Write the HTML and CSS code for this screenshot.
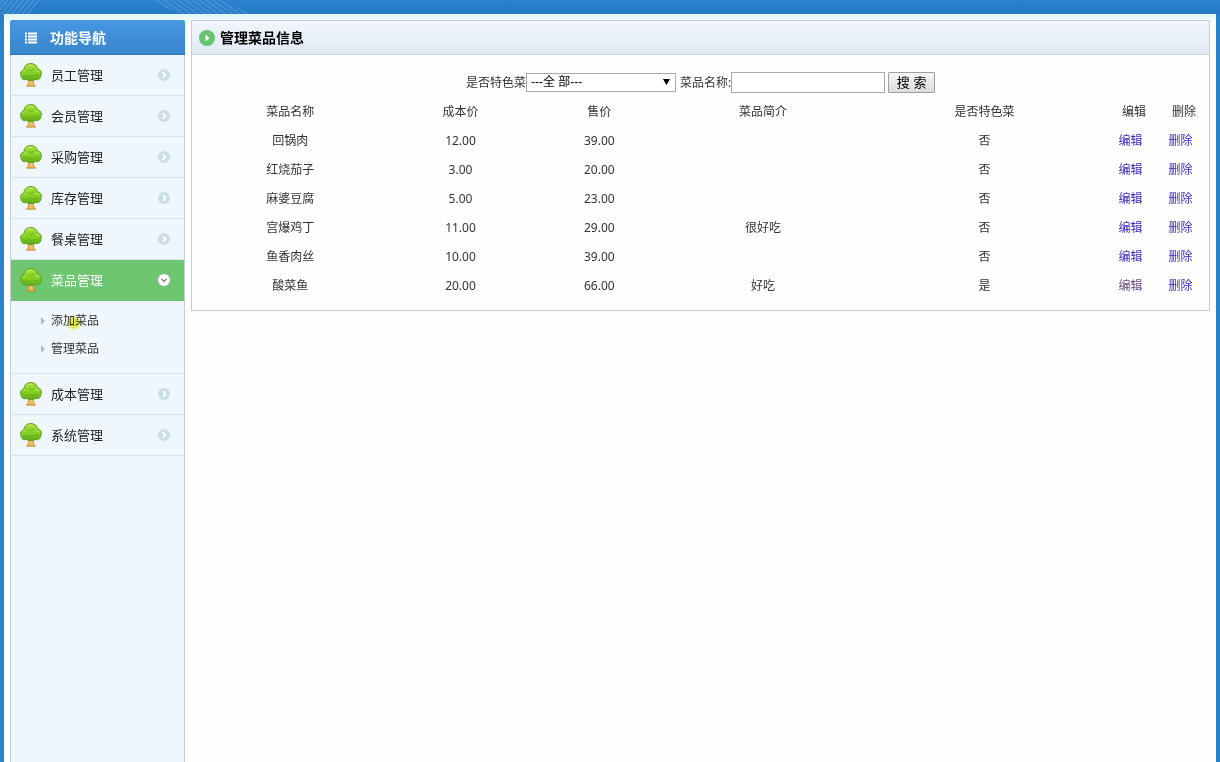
FILE: index.html
```html
<!DOCTYPE html>
<html lang="zh-CN">
<head>
<meta charset="utf-8">
<title>管理菜品信息</title>
<link rel="stylesheet" href="styles.css">
</head>
<body>
<svg class="defs" aria-hidden="true">
  <defs>
    <linearGradient id="leafFill" x1="0" y1="0" x2="0" y2="1"><stop offset="0" stop-color="#a9e03c"/><stop offset="0.6" stop-color="#84cd22"/><stop offset="1" stop-color="#5dab18"/></linearGradient>
    <pattern id="hatch" width="5" height="4" patternUnits="userSpaceOnUse" patternTransform="rotate(35)"><path d="M0 2h5" stroke="#5a9fdc" stroke-width="1"/></pattern>
    <pattern id="hatchLeft" width="5" height="4" patternUnits="userSpaceOnUse" patternTransform="rotate(-50)"><path d="M0 2h5" stroke="#5a9fdc" stroke-width="1"/></pattern>
  </defs>
  <symbol id="tree" viewBox="0 0 24 26">
    <path d="M9.500 16h5l.2 6 2 2.200H7.300l2-2.200z" fill="#e9b04a" stroke="#b9832c" stroke-width=".7"/>
    <path d="M11 18v5M13 18v5" stroke="#f8d583" stroke-width=".8"/>
    <path d="M7.500 17.500C4.500 18.500 1.800 16.500 2 13.700.6 11.200 2.200 8.300 5 8 4.800 4 8.300 1.400 12 1.500c3.600 0 6.200 2.200 6.400 5.300 3.200.4 4.900 3.600 3.500 6.500.3 3-2.500 5-5.600 4.200-2.500 1.400-6.500 1.400-8.800 0z" fill="url(#leafFill)" stroke="#549b18" stroke-width=".9"/>
    <path d="M4 13c1.500 2 4 2 5.500 0 1.500 2.300 5 2.300 6.500 0 1.300 1 3 .9 4-.5M10 7.500c1.500 1.500 4 1.200 5-.8" fill="none" stroke="#5fa81c" stroke-width=".8"/>
    <path d="M8 4.800c1.400-1.700 3.700-2.100 5.600-1.400M4.300 10c.4-.7.900-1.100 1.700-1.200M16.500 8.700c1.400-.4 2.700.2 3.300 1.500" fill="none" stroke="#cdf27a" stroke-width=".9"/>
  </symbol>
  <symbol id="right" viewBox="0 0 12 12"><circle cx="6" cy="6" r="6" fill="#ccdee5"/><path d="M4.700 3.200 7.600 6 4.700 8.800" fill="none" stroke="#fff" stroke-width="1.800"/></symbol>
  <symbol id="down" viewBox="0 0 12 12"><circle cx="6" cy="6" r="6" fill="#fff"/><path d="M3.300 4.800 6 7.500 8.700 4.800" fill="none" stroke="#7b8d80" stroke-width="1.400"/></symbol>
</svg>

<header class="topbar">
  <svg class="topbar-lines" width="260" height="14" aria-hidden="true">
    <path d="M0 0h40L30 14H0z" fill="url(#hatchLeft)"/>
    <path d="M150 0h75l24 14h-70z" fill="url(#hatch)"/>
  </svg>
</header>

<div class="frame">
  <nav class="sidebar">
    <h2 class="sidebar-title">
      <svg class="list-icon" viewBox="0 0 12 12" aria-hidden="true"><path d="M0 1.500h2M0 4.500h2M0 7.500h2M0 10.500h2M3 1.500h9M3 4.500h9M3 7.500h9M3 10.500h9" stroke="#fff" stroke-width="2"/></svg>
      功能导航
    </h2>
    <ul class="menu">
      <li><a class="menu-item" href="#"><svg class="tree"><use href="#tree"/></svg><span>员工管理</span><svg class="chevron"><use href="#right"/></svg></a></li>
      <li><a class="menu-item" href="#"><svg class="tree"><use href="#tree"/></svg><span>会员管理</span><svg class="chevron"><use href="#right"/></svg></a></li>
      <li><a class="menu-item" href="#"><svg class="tree"><use href="#tree"/></svg><span>采购管理</span><svg class="chevron"><use href="#right"/></svg></a></li>
      <li><a class="menu-item" href="#"><svg class="tree"><use href="#tree"/></svg><span>库存管理</span><svg class="chevron"><use href="#right"/></svg></a></li>
      <li><a class="menu-item" href="#"><svg class="tree"><use href="#tree"/></svg><span>餐桌管理</span><svg class="chevron"><use href="#right"/></svg></a></li>
      <li>
        <a class="menu-item active" href="#"><svg class="tree"><use href="#tree"/></svg><span>菜品管理</span><svg class="chevron"><use href="#down"/></svg></a>
        <ul class="submenu">
          <li><a class="submenu-item" href="#">添加菜品<span class="pointer-mark"></span></a></li>
          <li><a class="submenu-item" href="#">管理菜品</a></li>
        </ul>
      </li>
      <li><a class="menu-item" href="#"><svg class="tree"><use href="#tree"/></svg><span>成本管理</span><svg class="chevron"><use href="#right"/></svg></a></li>
      <li><a class="menu-item" href="#"><svg class="tree"><use href="#tree"/></svg><span>系统管理</span><svg class="chevron"><use href="#right"/></svg></a></li>
    </ul>
  </nav>

  <main class="panel">
    <h1 class="panel-title">
      <svg class="play-icon" viewBox="0 0 16 16" aria-hidden="true"><circle cx="8" cy="8" r="8" fill="#66c56c"/><path d="M6.500 4.500 10.500 8l-4 3.500z" fill="#fff"/></svg>
      管理菜品信息
    </h1>
    <form class="search">
      <label for="special">是否特色菜</label>
      <span class="select-wrap">
        <select id="special" class="select"><option>---全 部---</option></select>
        <svg class="select-arrow" viewBox="0 0 7 6" aria-hidden="true"><path d="M0 0h7L3.500 6z"/></svg>
      </span>
      <label class="name-label" for="dish">菜品名称:</label>
      <input id="dish" class="input" type="text">
      <button class="button" type="button">搜 索</button>
    </form>
    <table class="dishes">
      <colgroup><col class="col-name"><col class="col-cost"><col class="col-price"><col class="col-intro"><col class="col-special"><col class="col-action"><col class="col-action"></colgroup>
      <thead>
        <tr><th>菜品名称</th><th>成本价</th><th>售价</th><th>菜品简介</th><th>是否特色菜</th><th>编辑</th><th>删除</th></tr>
      </thead>
      <tbody>
        <tr><td>回锅肉</td><td>12.00</td><td>39.00</td><td></td><td>否</td><td class="action"><a href="#">编辑</a></td><td class="action"><a href="#">删除</a></td></tr>
        <tr><td>红烧茄子</td><td>3.00</td><td>20.00</td><td></td><td>否</td><td class="action"><a href="#">编辑</a></td><td class="action"><a href="#">删除</a></td></tr>
        <tr><td>麻婆豆腐</td><td>5.00</td><td>23.00</td><td></td><td>否</td><td class="action"><a href="#">编辑</a></td><td class="action"><a href="#">删除</a></td></tr>
        <tr><td>宫爆鸡丁</td><td>11.00</td><td>29.00</td><td>很好吃</td><td>否</td><td class="action"><a href="#">编辑</a></td><td class="action"><a href="#">删除</a></td></tr>
        <tr><td>鱼香肉丝</td><td>10.00</td><td>39.00</td><td></td><td>否</td><td class="action"><a href="#">编辑</a></td><td class="action"><a href="#">删除</a></td></tr>
        <tr><td>酸菜鱼</td><td>20.00</td><td>66.00</td><td>好吃</td><td>是</td><td class="action"><a class="seen" href="#">编辑</a></td><td class="action"><a href="#">删除</a></td></tr>
      </tbody>
    </table>
  </main>
</div>
</body>
</html>
```

FILE: styles.css
```css
* { box-sizing: border-box; }

body {
  display: flex;
  flex-direction: column;
  min-height: 100vh;
  margin: 0;
  background: #2b80cb;
  color: #333;
  font: 12px/20px "Noto Sans", "Noto Sans CJK SC", sans-serif;
}

ul { margin: 0; padding: 0; list-style: none; }
a { text-decoration: none; }
.defs { position: absolute; width: 0; height: 0; }

.topbar { height: 14px; background: linear-gradient(#2a83d0, #2778c2); }
.topbar-lines { display: block; }

.frame {
  display: flex;
  flex: 1;
  align-items: flex-start;
  gap: 6px;
  margin: 0 4px;
  padding: 6px 6px 0;
  background: linear-gradient(#dff6fa, #fdfefd 10px);
}

.sidebar {
  display: flex;
  flex-direction: column;
  align-self: stretch;
  flex: none;
  width: 175px;
}

.sidebar-title {
  display: flex;
  align-items: center;
  gap: 13px;
  height: 35px;
  margin: 0;
  padding: 2px 0 0 15px;
  border-bottom: 1px solid #2e73b5;
  border-radius: 2px 2px 0 0;
  background: linear-gradient(#4797e2, #3a85cd);
  color: #fff;
  font-size: 14px;
}
.list-icon { width: 12px; height: 12px; }

.menu {
  flex: 1;
  border: solid #bccfe4;
  border-width: 0 1px;
  background: #eff7fc;
}

.menu-item {
  display: flex;
  align-items: center;
  height: 41px;
  padding: 0 14px 0 8px;
  border-bottom: 1px solid #d8e4ec;
  color: #222;
  font-size: 13px;
}
.menu-item.active { border-color: #6fc670; background: #6fc670; color: #fff; }
.tree { width: 24px; height: 26px; margin-right: 8px; }
.chevron { width: 12px; height: 12px; margin-left: auto; }

.submenu { padding: 6px 0 10px 30px; border-bottom: 1px solid #d8e4ec; }
.submenu-item {
  position: relative;
  display: flex;
  align-items: center;
  gap: 6px;
  height: 28px;
  color: #333;
}
.submenu-item::before {
  content: "";
  border: solid transparent;
  border-width: 4px 0 4px 4px;
  border-left-color: #adb7bd;
}
.pointer-mark {
  position: absolute;
  left: 25px;
  top: 8px;
  width: 16px;
  height: 16px;
  border-radius: 50%;
  background: radial-gradient(closest-side, #f1f04a 50%, #f1f04a00);
  mix-blend-mode: multiply;
}

.panel {
  flex: 1;
  padding-bottom: 10px;
  border: 1px solid #c9ccd6;
  background: #fdfefd;
}

.panel-title {
  display: flex;
  align-items: center;
  gap: 5px;
  height: 34px;
  margin: 0;
  padding-left: 7px;
  border-bottom: 1px solid #c9d3dd;
  background: linear-gradient(#f2f6fe, #e0ebf4);
  color: #000;
  font-size: 14px;
}
.play-icon { width: 16px; height: 16px; }

.search {
  display: flex;
  align-items: center;
  justify-content: center;
  padding: 17px 0 4px;
}
.select-wrap { position: relative; display: flex; }
.select, .input {
  border: 1px solid #a9a9a9;
  background: #fff;
  color: #000;
  font: 12px "Liberation Sans", "Noto Sans CJK SC", sans-serif;
}
.select {
  width: 150px;
  height: 19px;
  padding: 0 4px;
  border-radius: 0;
  appearance: none;
  line-height: 17px;
}
.select-arrow { position: absolute; right: 6px; top: 6px; width: 7px; height: 6px; pointer-events: none; }
.name-label { margin-left: 4px; }
.input { width: 154px; height: 21px; }
.button {
  height: 21px;
  width: 47px;
  margin-left: 3px;
  padding: 0;
  border: 1px solid #a0a0a0;
  border-radius: 1px;
  background: linear-gradient(#f6f6f6, #dcdcdc);
  color: #000;
  font: 13px/18px "Liberation Sans", "Noto Sans CJK SC", sans-serif;
}

.dishes { width: 100%; border-collapse: collapse; table-layout: fixed; }
.dishes th, .dishes td { height: 29px; padding: 0; font-weight: normal; text-align: center; }
.dishes .action { padding-right: 7px; }
.dishes a { color: #3a2bc4; }
.dishes .seen { color: #6b4a83; }
.col-name { width: 19.3%; }
.col-cost { width: 14.2%; }
.col-price { width: 13.1%; }
.col-intro { width: 19.1%; }
.col-action { width: 50px; }
```
